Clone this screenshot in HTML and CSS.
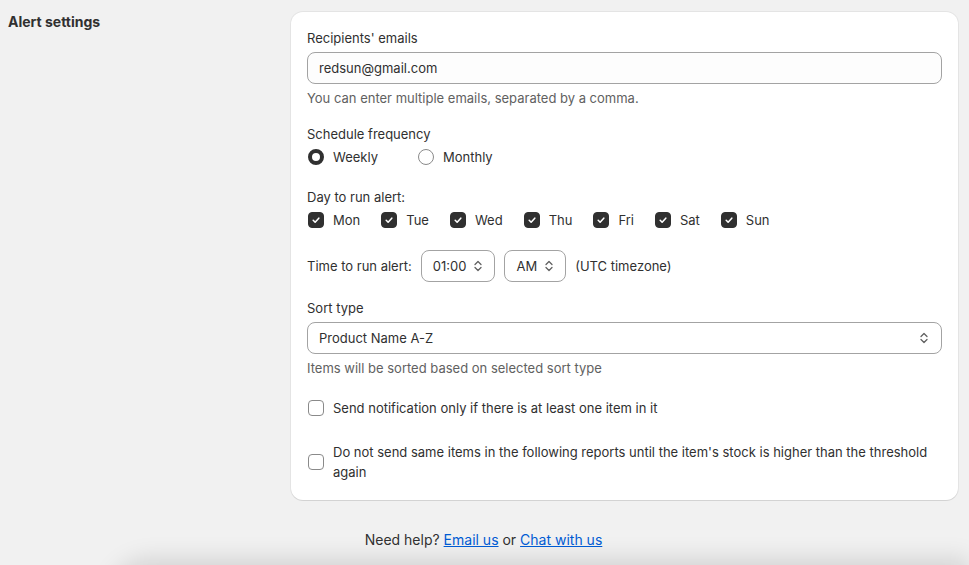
FILE: index.html
```html
<!DOCTYPE html>
<html lang="en">
<head>
    <meta charset="UTF-8">
    <meta name="viewport" content="width=device-width, initial-scale=1.0">
    <title>Alert settings</title>
    <link rel="stylesheet" href="styles.css">
</head>
<body>
    <div class="layout">
        <div class="annotation">
            <h2>Alert settings</h2>
        </div>

        <div class="card">
            <!-- Recipients -->
            <div class="field">
                <label class="label">Recipients' emails</label>
                <div class="input">redsun@gmail.com</div>
                <p class="help">You can enter multiple emails, separated by a comma.</p>
            </div>

            <!-- Frequency -->
            <div class="field gap-16">
                <label class="label">Schedule frequency</label>
                <div class="radios">
                    <span class="choice"><span class="radio checked"></span>Weekly</span>
                    <span class="choice"><span class="radio"></span>Monthly</span>
                </div>
            </div>

            <!-- Days -->
            <div class="field gap-20">
                <label class="label">Day to run alert:</label>
                <div class="days" id="days"></div>
            </div>

            <!-- Time -->
            <div class="time-row gap-20">
                <span>Time to run alert:</span>
                <div class="select small">01:00 <svg class="chev" viewBox="0 0 16 16"><path d="M5 6.5l3-3 3 3M5 9.5l3 3 3-3"/></svg></div>
                <div class="select small">AM <svg class="chev" viewBox="0 0 16 16"><path d="M5 6.5l3-3 3 3M5 9.5l3 3 3-3"/></svg></div>
                <span>(UTC timezone)</span>
            </div>

            <!-- Sort -->
            <div class="field gap-16">
                <label class="label">Sort type</label>
                <div class="select wide">Product Name A-Z <svg class="chev" viewBox="0 0 16 16"><path d="M5 6.5l3-3 3 3M5 9.5l3 3 3-3"/></svg></div>
                <p class="help">Items will be sorted based on selected sort type</p>
            </div>

            <label class="choice option gap-20"><span class="box"></span>Send notification only if there is at least one item in it</label>
            <label class="choice option gap-24"><span class="box"></span>Do not send same items in the following reports until the item's stock is higher than the threshold again</label>
        </div>
    </div>

    <p class="need-help">Need help? <a href="#">Email us</a> or <a href="#">Chat with us</a></p>
    <div class="bottom-bar"></div>

    <script>
        const days = ['Mon', 'Tue', 'Wed', 'Thu', 'Fri', 'Sat', 'Sun'];
        const daysEl = document.getElementById('days');
        days.forEach(day => {
            const item = document.createElement('span');
            item.className = 'choice';
            item.innerHTML = `<span class="box checked"><svg viewBox="0 0 16 16"><path d="M4.8 8.3l2.2 2.2 4.2-4.6"/></svg></span>${day}`;
            daysEl.appendChild(item);
        });
    </script>
</body>
</html>
```

FILE: styles.css
```css
* {
    box-sizing: border-box;
    margin: 0;
    padding: 0;
}

body {
    background: #f1f1f1;
    font-family: Inter, "Noto Sans", sans-serif;
    font-size: 13px;
    line-height: 20px;
    color: #303030;
    overflow: hidden;
    height: 565px;
}

.layout {
    display: flex;
    padding: 12px 11px 0 8px;
}

.annotation {
    width: 283px;
    flex-shrink: 0;
}

.annotation h2 {
    font-size: 14px;
    font-weight: 650;
    line-height: 20px;
}

.card {
    flex: 1;
    background: white;
    border-radius: 12px;
    box-shadow: 0 1px 0 rgba(0,0,0,0.07), 0 0 0 1px rgba(0,0,0,0.05);
    padding: 16px 16px 18px 16px;
    display: flex;
    flex-direction: column;
}

.field {
    display: flex;
    flex-direction: column;
}

.gap-16 { margin-top: 16px; }
.gap-20 { margin-top: 20px; }
.gap-24 { margin-top: 24px; }

.label {
    display: block;
    margin-bottom: 4px;
}

.input {
    height: 32px;
    border: 1px solid #a3a3a3;
    border-radius: 8px;
    background: #fdfdfd;
    padding: 5px 11px;
}

.help {
    color: #616161;
    margin-top: 4px;
}

.radios {
    display: flex;
    gap: 39px;
    margin-top: -1px;
}

.choice {
    display: flex;
    align-items: center;
    gap: 9px;
    padding-left: 1px;
}

.radio {
    width: 16px;
    height: 16px;
    border-radius: 50%;
    border: 1px solid #8a8a8a;
    background: white;
}

.radio.checked {
    border: 4.5px solid #303030;
}

.days {
    display: flex;
    gap: 20px;
    margin-top: -1px;
}

.box {
    width: 16px;
    height: 16px;
    flex-shrink: 0;
    border-radius: 4px;
    border: 1px solid #8a8a8a;
    background: white;
}

.box.checked {
    border-color: #303030;
    background: #303030;
}

.box svg {
    display: block;
    width: 14px;
    height: 14px;
}

.box svg path {
    fill: none;
    stroke: white;
    stroke-width: 1.8;
    stroke-linecap: round;
    stroke-linejoin: round;
}

.time-row {
    display: flex;
    align-items: center;
    gap: 9px;
}

.select {
    height: 32px;
    border: 1px solid #a3a3a3;
    border-radius: 8px;
    display: flex;
    align-items: center;
    justify-content: space-between;
    padding: 0 8px 0 11px;
    background: white;
}

.select.small {
    gap: 4px;
}

.select.wide {
    width: 100%;
    padding-right: 9px;
}

.chev {
    width: 16px;
    height: 16px;
}

.chev path {
    fill: none;
    stroke: #616161;
    stroke-width: 1.3;
    stroke-linecap: round;
    stroke-linejoin: round;
}

.option {
    align-items: center;
}

.need-help {
    text-align: center;
    font-size: 14px;
    margin-top: 30px;
    padding-right: 2px;
}

.need-help a {
    color: #005bd3;
}

.bottom-bar {
    margin: 15px 0 0 110px;
    height: 40px;
    background: #f1f1f1;
    border-radius: 40px 0 0 0;
    box-shadow: 0 -6px 24px rgba(0,0,0,0.13);
}
```
